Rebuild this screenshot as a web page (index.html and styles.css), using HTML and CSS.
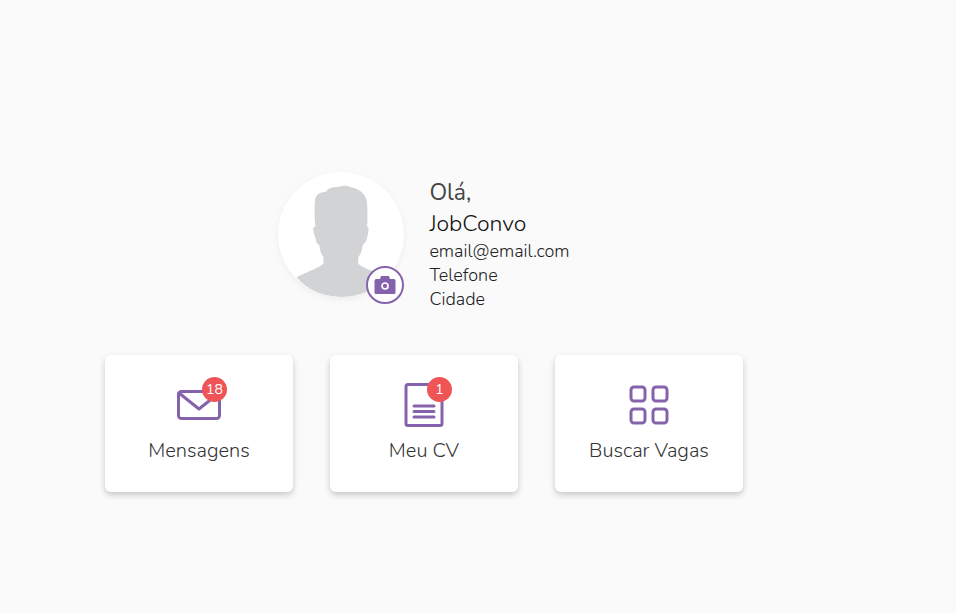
FILE: index.html
```html
<!DOCTYPE html>
<html lang="pt-BR">
<head>
    <meta charset="UTF-8">
    <meta name="viewport" content="width=device-width, initial-scale=1.0">
    <title>JobConvo</title>
    <link rel="stylesheet" href="styles.css">
</head>
<body>
    <main>
        <!-- Profile -->
        <section class="profile">
            <div class="avatar">
                <svg class="avatar-picture" viewBox="30 36 375 375" aria-hidden="true">
                    <path fill="#d1d3d4" d="M84 352 C108 337 145 328 165 311 L165 292 C157 284 154 268 152 255 C145 252 142 243 141 233 C137 224 134 214 134 205 C135 200 138 200 141 200 C138 175 137 145 140 117 C144 100 156 97 173 95 C178 83 192 81 213 80 C228 75 238 77 247 82 C276 87 292 105 295 124 C298 148 297 174 296 201 C299 201 301 204 300 209 C299 220 297 230 294 240 C291 247 288 251 283 254 C281 268 277 284 269 292 L269 311 C290 328 327 337 352 350 C322 387 274 411 218 411 C163 411 116 389 84 352 Z"/>
                </svg>
                <button class="photo-button" type="button" aria-label="Alterar foto">
                    <svg width="22" height="20" viewBox="0 0 22 20" aria-hidden="true">
                        <path fill="#8563ac" d="M7 1h8l1 3h4q1.500 0 1.500 1.500v12q0 1.500-1.500 1.500H2q-1.500 0-1.500-1.500v-12Q.5 4 2 4h4z"/>
                        <circle cx="11" cy="11" r="3" fill="none" stroke="#fff" stroke-width="1.700"/>
                    </svg>
                </button>
            </div>
            <div class="profile-info">
                <h1>Olá,<br><a href="#">JobConvo</a></h1>
                <p>email@email.com</p>
                <p>Telefone</p>
                <p>Cidade</p>
            </div>
        </section>

        <!-- Shortcuts -->
        <nav class="cards">
            <a class="card" href="#">
                <span class="card-icon">
                    <svg width="48" height="48" viewBox="0 0 48 48" aria-hidden="true">
                        <rect x="3.500" y="10.500" width="41" height="27" rx="3"/>
                        <path d="M4 12l20 16 20-16"/>
                    </svg>
                    <span class="badge">18</span>
                </span>
                Mensagens
            </a>
            <a class="card" href="#">
                <span class="card-icon">
                    <svg width="48" height="48" viewBox="0 0 48 48" aria-hidden="true">
                        <rect x="6" y="3.500" width="36" height="41" rx="2"/>
                        <path d="M14 25h20M14 30.500h20M14 36h20"/>
                    </svg>
                    <span class="badge">1</span>
                </span>
                Meu CV
            </a>
            <a class="card" href="#">
                <span class="card-icon">
                    <svg width="48" height="48" viewBox="0 0 48 48" aria-hidden="true">
                        <rect x="6" y="6" width="14" height="14" rx="3"/>
                        <rect x="28" y="6" width="14" height="14" rx="3"/>
                        <rect x="6" y="28" width="14" height="14" rx="3"/>
                        <rect x="28" y="28" width="14" height="14" rx="3"/>
                    </svg>
                </span>
                Buscar Vagas
            </a>
        </nav>
    </main>
</body>
</html>
```
FILE: styles.css
```css
/* Global Styles */
* {
    box-sizing: border-box;
}

body {
    margin: 0;
    background-color: #fafafa;
    color: #222;
    font-family: Nunito, Lato, sans-serif;
    font-size: 18px;
    font-weight: 300;
    line-height: 24px;
}

a {
    color: inherit;
    text-decoration: none;
}

main {
    display: flex;
    flex-direction: column;
    align-items: center;
    gap: 44px;
    padding: 172px 108px 40px 0;
}

/* Profile Styles */
.profile {
    display: flex;
    align-items: flex-start;
    gap: 25px;
}

.avatar {
    position: relative;
    width: 126px;
    height: 125px;
}

.avatar-picture {
    display: block;
    width: 100%;
    height: 100%;
    border-radius: 50%;
    background-color: #fff;
    box-shadow: 0 2px 6px rgba(0, 0, 0, 0.06);
}

.photo-button {
    position: absolute;
    right: 0;
    bottom: -7px;
    display: flex;
    align-items: center;
    justify-content: center;
    width: 38px;
    height: 38px;
    padding: 0;
    border: 2px solid #8563ac;
    border-radius: 50%;
    background-color: #fff;
    cursor: pointer;
}

.profile-info {
    padding-top: 5px;
}

h1 {
    margin: 0;
    color: #444;
    font-size: 23px;
    font-weight: 400;
    line-height: 31px;
}

h1 a {
    color: #111;
    font-weight: 300;
}

p {
    margin: 0;
}

/* Card Styles */
.cards {
    display: flex;
    flex-wrap: wrap;
    justify-content: center;
    gap: 37px;
}

.card {
    display: flex;
    flex-direction: column;
    align-items: center;
    gap: 6px;
    width: 188px;
    padding: 26px 16px;
    border-radius: 6px;
    background-color: #fff;
    box-shadow: 0 3px 6px rgba(0, 0, 0, 0.2);
    color: #333;
    font-size: 20px;
    line-height: 31px;
}

.card-icon {
    position: relative;
    height: 48px;
}

.card-icon svg {
    display: block;
    fill: none;
    stroke: #8563ac;
    stroke-width: 3;
    stroke-linecap: round;
    stroke-linejoin: round;
}

.badge {
    position: absolute;
    top: -4px;
    right: -4px;
    width: 25px;
    height: 25px;
    border-radius: 50%;
    background-color: #ef5557;
    color: #fff;
    font-size: 14px;
    font-weight: 400;
    line-height: 25px;
    text-align: center;
}
```
